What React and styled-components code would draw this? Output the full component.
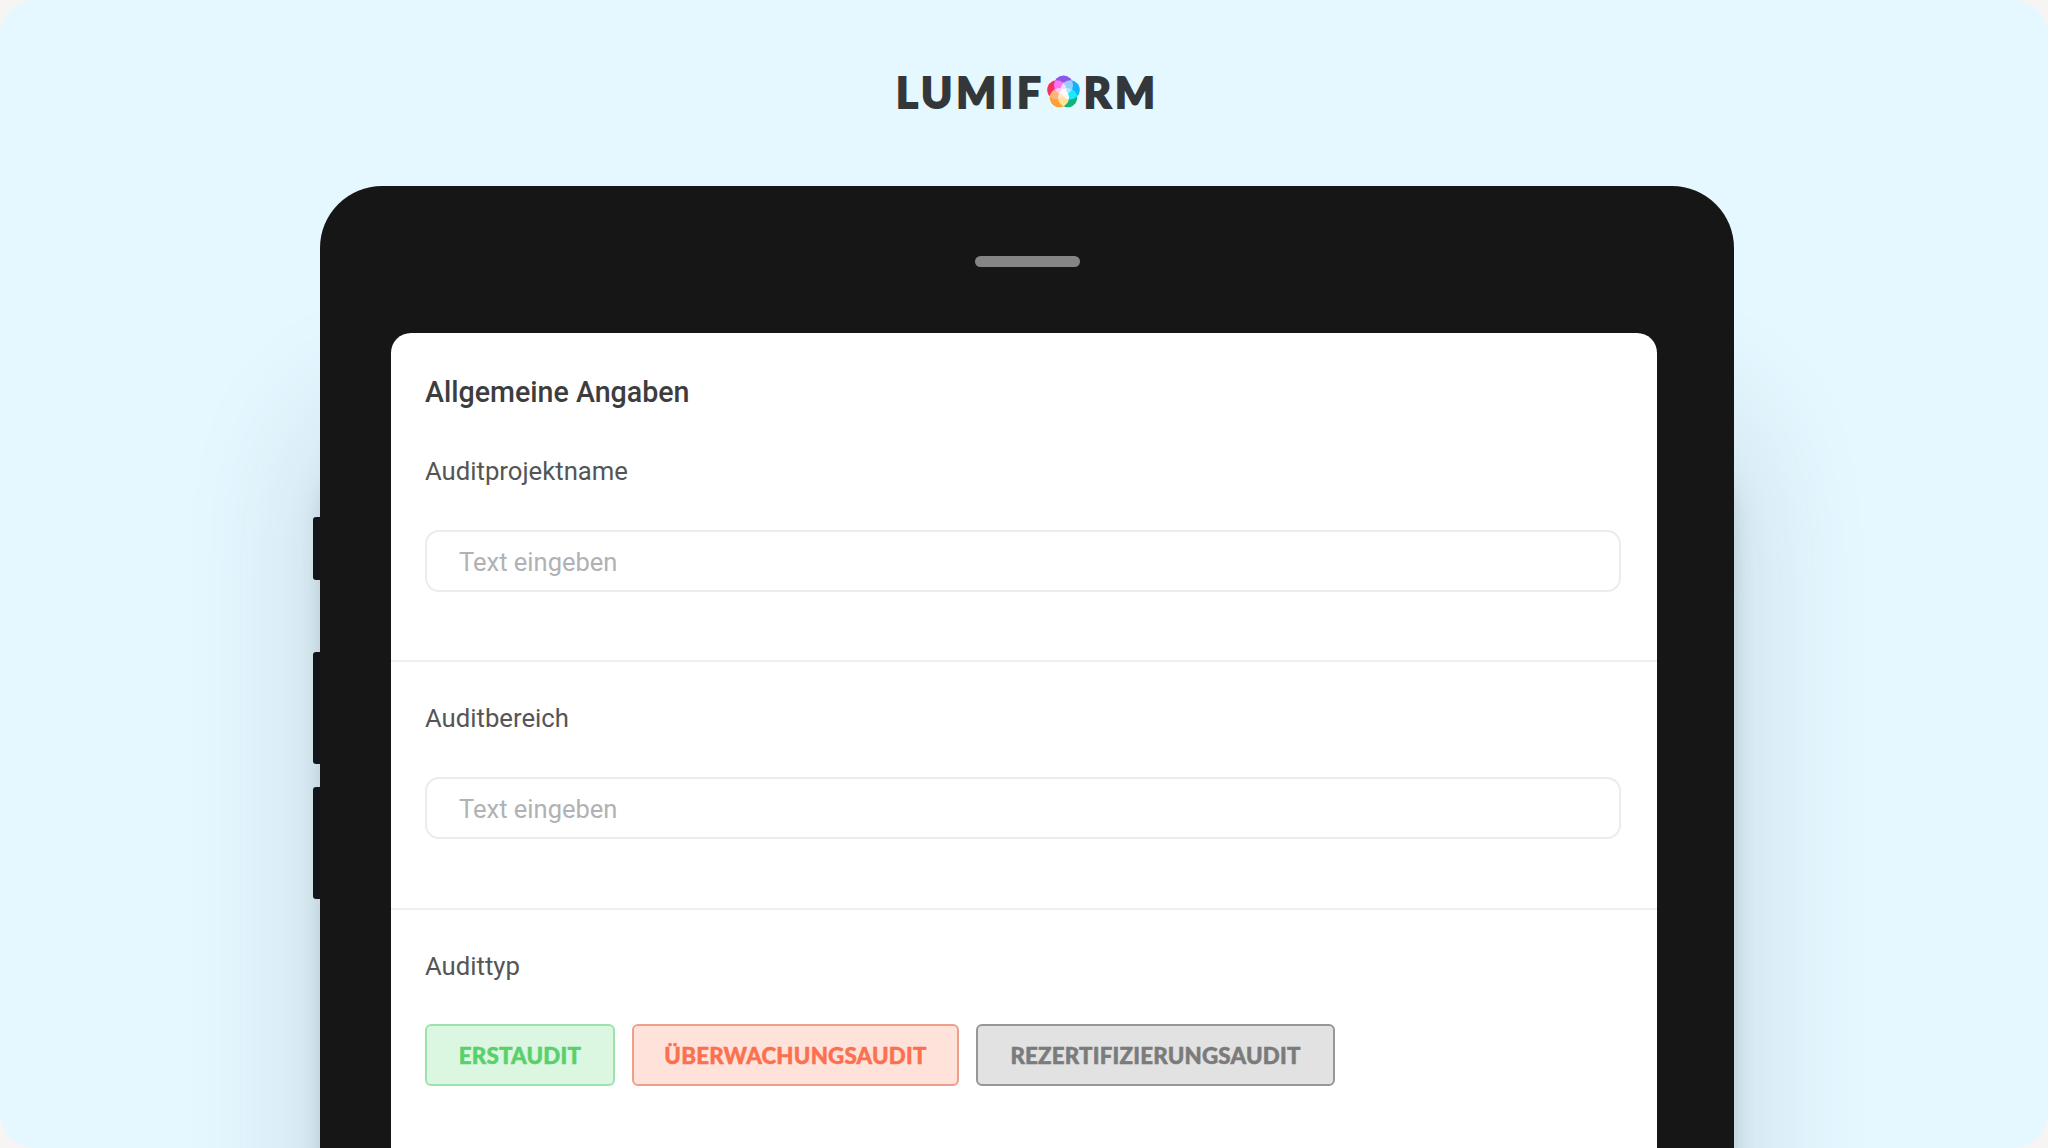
import React from "react";
import styled, { createGlobalStyle } from "styled-components";

const Global = createGlobalStyle`
  html, body { margin: 0; padding: 0; background: #f6f5f4; overflow: hidden; }
  #root { width: 2048px; height: 1148px; }
  * { box-sizing: border-box; }
`;

const Stage = styled.div`
  width: 2048px;
  height: 1148px;
  background: #e5f7ff;
  border-radius: 36px;
  overflow: hidden;
  display: flex;
  flex-direction: column;
  align-items: center;
`;

const Brand = styled.header`
  flex: none;
  height: 186px;
  padding-top: 73px;
  display: flex;
  align-items: flex-start;
`;

const Wordmark = styled.div`
  display: flex;
  align-items: center;
  height: 38px;
  margin-left: 7px;
  font-family: "Lato", sans-serif;
  font-weight: 900;
  font-size: 42px;
  line-height: 38px;
  letter-spacing: 4px;
  color: #33373a;
  -webkit-text-stroke: 1.8px #33373a;
`;

const Device = styled.section`
  position: relative;
  flex: none;
  width: 1414px;
  height: 1100px;
  margin-left: 6px;
  background: #161616;
  border-radius: 62px 62px 0 0;
  padding: 147px 77px 0 71px;
  box-shadow: 0 230px 140px -6px rgba(45, 65, 80, 0.2), 0 270px 26px -8px rgba(30, 45, 60, 0.3);
`;

const Speaker = styled.div`
  position: absolute;
  top: 70px;
  left: 655px;
  width: 105px;
  height: 11px;
  border-radius: 5.5px;
  background: #858585;
`;

const SideButton = styled.div`
  position: absolute;
  left: -7px;
  top: ${(p) => p.$top}px;
  width: 9px;
  height: ${(p) => p.$h}px;
  background: #12161a;
  border-radius: 3px 0 0 3px;
`;

const Screen = styled.main`
  background: #fff;
  border-radius: 20px 20px 0 0;
  height: 100%;
`;

const Section = styled.div`
  padding: ${(p) => p.$pt}px 36px 0 34px;
  height: ${(p) => p.$h}px;
  border-bottom: ${(p) => (p.$line ? "2px solid #f0f0f1" : "none")};
`;

const Title = styled.h2`
  margin: 0 0 48px;
  font-family: "Roboto", sans-serif;
  font-size: 28.6px;
  line-height: 32px;
  font-weight: 500;
  color: #3d3d3f;
`;

const Label = styled.div`
  font-family: "Roboto", sans-serif;
  font-size: 25.7px;
  line-height: 30px;
  font-weight: 400;
  color: #555557;
`;

const Field = styled.div`
  margin-top: ${(p) => p.$mt}px;
  height: 62px;
  border: 2px solid #ececee;
  border-radius: 14px;
  padding: 2px 0 0 32px;
  display: flex;
  align-items: center;
  font-family: "Roboto", sans-serif;
  font-size: 25.5px;
  color: #b0b2b5;
`;

const Chips = styled.div`
  margin-top: 43px;
  display: flex;
  gap: 17px;
`;

const tones = {
  green: { bg: "#dcf7e1", border: "#9be3ab", fg: "#5ad06d" },
  red: { bg: "#ffe3db", border: "#ee9f8a", fg: "#fb7150" },
  gray: { bg: "#e2e2e2", border: "#979797", fg: "#7b7b7b" },
};

const Chip = styled.div`
  width: ${(p) => p.$w}px;
  height: 62px;
  border-radius: 6px;
  border: 2px solid ${(p) => tones[p.$tone].border};
  background: ${(p) => tones[p.$tone].bg};
  color: ${(p) => tones[p.$tone].fg};
  display: flex;
  align-items: center;
  justify-content: center;
  font-family: "Lato", sans-serif;
  font-weight: 900;
  font-size: 22.3px;
  letter-spacing: 0.2px;
  -webkit-text-stroke: 0.5px ${(p) => tones[p.$tone].fg};
`;

const MarkSvg = styled.svg`
  flex: none;
  margin: 0 4px 0 2px;
  isolation: isolate;
`;

const Petal = styled.circle`
  mix-blend-mode: screen;
`;

function LogoMark() {
  const petals = [
    { c: "#8f55ea", a: 0 },
    { c: "#10b4fb", a: 72 },
    { c: "#0db57c", a: 144 },
    { c: "#ffa030", a: 216 },
    { c: "#f5305f", a: 288 },
  ];
  return (
    <MarkSvg width="33" height="34" viewBox="-16.5 -17 33 34">
      {petals.map((p) => (
        <Petal key={p.a} cx="0" cy="-7" r="9.6" fill={p.c} transform={`rotate(${p.a})`} />
      ))}
    </MarkSvg>
  );
}

export default function App() {
  return (
    <Stage>
      <Global />
      <Brand>
        <Wordmark>
          LUMIF
          <LogoMark />
          RM
        </Wordmark>
      </Brand>
      <Device>
        <Speaker />
        <SideButton $top={331} $h={63} />
        <SideButton $top={466} $h={112} />
        <SideButton $top={601} $h={112} />
        <Screen>
          <Section $pt={43} $h={329} $line>
            <Title>Allgemeine Angaben</Title>
            <Label>Auditprojektname</Label>
            <Field $mt={44}>Text eingeben</Field>
          </Section>
          <Section $pt={41} $h={248} $line>
            <Label>Auditbereich</Label>
            <Field $mt={44}>Text eingeben</Field>
          </Section>
          <Section $pt={41} $h={300}>
            <Label>Audittyp</Label>
            <Chips>
              <Chip $tone="green" $w={190}>ERSTAUDIT</Chip>
              <Chip $tone="red" $w={327}>ÜBERWACHUNGSAUDIT</Chip>
              <Chip $tone="gray" $w={359}>REZERTIFIZIERUNGSAUDIT</Chip>
            </Chips>
          </Section>
        </Screen>
      </Device>
    </Stage>
  );
}
